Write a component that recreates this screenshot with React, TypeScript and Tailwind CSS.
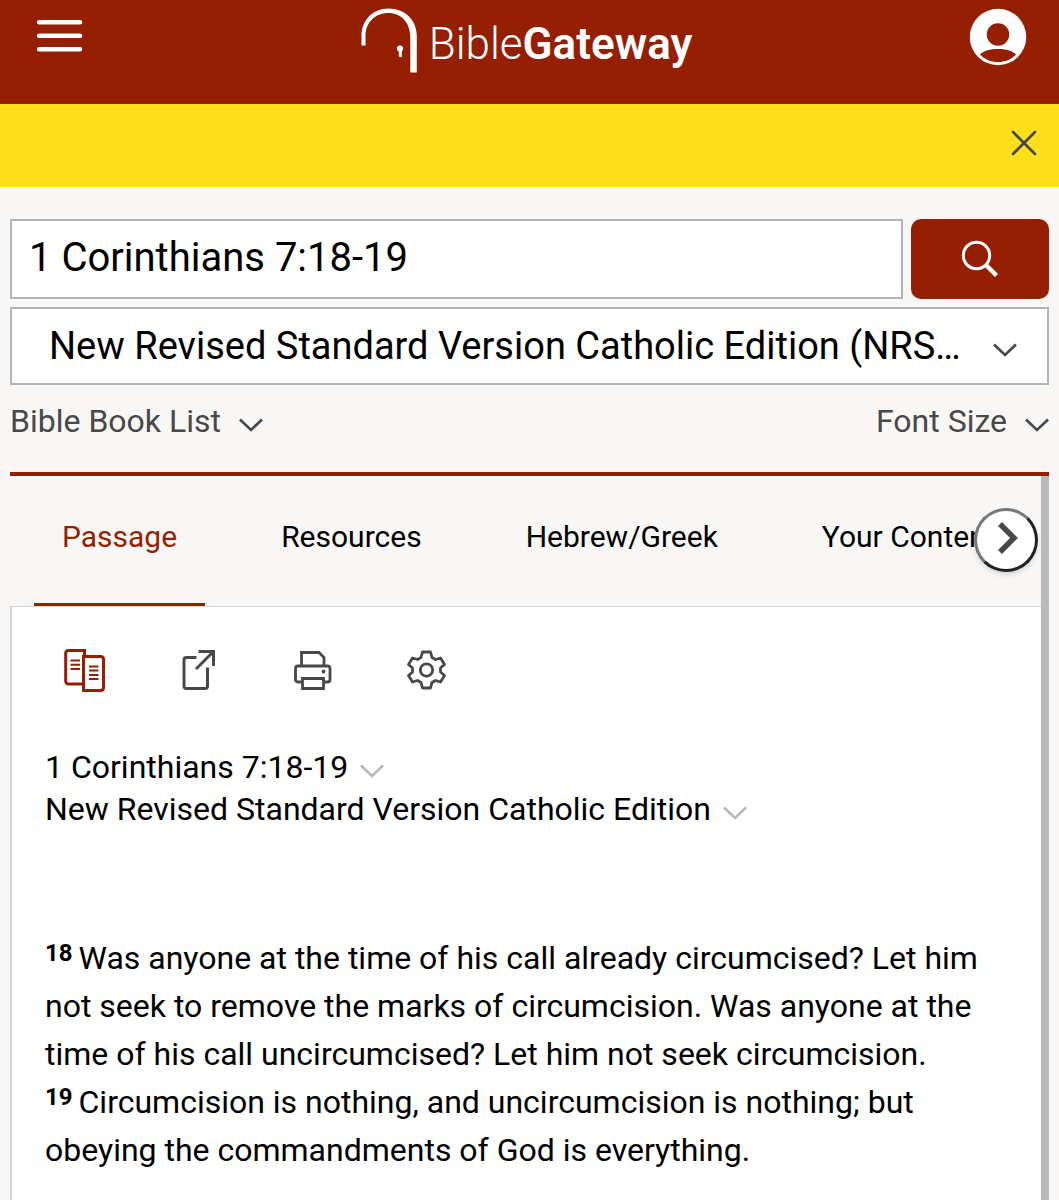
import { useState } from "react";

const tabs = ["Passage", "Resources", "Hebrew/Greek", "Your Content"];

const verses = [
  {
    number: 18,
    text: "Was anyone at the time of his call already circumcised? Let him not seek to remove the marks of circumcision. Was anyone at the time of his call uncircumcised? Let him not seek circumcision.",
  },
  {
    number: 19,
    text: "Circumcision is nothing, and uncircumcision is nothing; but obeying the commandments of God is everything.",
  },
];

function Chevron({ className }: { className?: string }) {
  return (
    <svg
      viewBox="0 0 24 14"
      className={`h-[14px] w-6 shrink-0 ${className ?? ""}`}
      fill="none"
      stroke="currentColor"
      strokeWidth="2.7"
      aria-hidden="true"
    >
      <path d="M1 1.5 12 12 23 1.5" />
    </svg>
  );
}

function Logo() {
  return (
    <a href="#" aria-label="BibleGateway" className="flex items-start text-white">
      <svg viewBox="0 0 56 66" className="mt-2 h-[66px] w-14" fill="none" aria-hidden="true">
        <path
          d="M0.5 37.5V28C0.5 12 12 0.5 27.5 0.5C44 0.5 55.8 12 55.8 28V64.5H49.3V29C49.3 14.5 40 5 27.500 5C14 5 4.5 14.500 4.5 28V37.5Z"
          fill="currentColor"
        />
        <circle cx="39" cy="40.500" r="3.1" fill="currentColor" />
        <path d="M37.800 41.500H40.800V49.500L37.800 48.500Z" fill="currentColor" />
      </svg>
      <span className="mt-4 ml-3 text-[44px] leading-[56px]">
        <span className="font-light">Bible</span>
        <span className="font-semibold">Gateway</span>
      </span>
    </a>
  );
}

function Header() {
  return (
    <header className="flex h-[104px] items-start justify-between bg-[#941f03] pr-8 pl-9 text-white">
      <button type="button" aria-label="Menu" className="mt-[19px] w-12">
        <svg
          viewBox="0 0 48 34"
          className="h-[34px] w-12"
          stroke="currentColor"
          strokeWidth="4.6"
          strokeLinecap="round"
        >
          <path d="M3.2 3.2H44M3.2 16.7H44M3.2 30.2H44" />
        </svg>
      </button>
      <Logo />
      <button type="button" aria-label="Account" className="mt-2">
        <svg viewBox="0 0 58 58" className="size-[58px]">
          <circle cx="29" cy="29" r="28.2" fill="white" />
          <circle cx="29" cy="26.5" r="11.2" fill="#941f03" />
          <path
            d="M11 46.5C15 42.5 21 41 29 41S43 42.5 47 46.5C42.5 51.5 36 54 29 54S15.5 51.5 11 46.5Z"
            fill="#941f03"
          />
        </svg>
      </button>
    </header>
  );
}

function Banner() {
  return (
    <div className="flex h-[83px] items-center justify-end bg-[#ffe01b] pr-[22px] pb-[6px] text-[#484848]">
      <button type="button" aria-label="Close">
        <svg
          viewBox="0 0 26 26"
          className="size-[26px]"
          stroke="currentColor"
          strokeWidth="2.7"
          strokeLinecap="round"
        >
          <path d="M2 2 24 24M24 2 2 24" />
        </svg>
      </button>
    </div>
  );
}

function SearchForm() {
  return (
    <form className="flex flex-col gap-2" onSubmit={(e) => e.preventDefault()}>
      <div className="flex gap-2">
        <input
          type="text"
          aria-label="Search passage"
          defaultValue="1 Corinthians 7:18-19"
          className="h-20 min-w-0 flex-1 border-2 border-[#b3b3b3] bg-white px-[17px] pb-1 text-[40px] text-black"
        />
        <button
          type="submit"
          aria-label="Search"
          className="flex h-20 w-[138px] items-center justify-center rounded-[10px] bg-[#941f03] text-white"
        >
          <svg viewBox="0 0 38 38" className="size-[38px]" fill="none" stroke="currentColor">
            <circle cx="15.5" cy="15.5" r="13.2" strokeWidth="3" />
            <path d="M24.5 24.5 35.5 35.5" strokeWidth="4.4" />
          </svg>
        </button>
      </div>
      <div className="relative">
        <select
          aria-label="Bible version"
          className="h-[78px] w-full appearance-none truncate border-2 border-[#b3b3b3] bg-white pr-[74px] pl-[37px] text-[38px] text-black"
        >
          <option>New Revised Standard Version Catholic Edition (NRSVCE)</option>
        </select>
        <Chevron className="pointer-events-none absolute top-9 right-8 text-[#484848]" />
      </div>
    </form>
  );
}

function Toolbar() {
  return (
    <div className="flex items-center gap-[75px] pl-[19px] text-[#484848]">
      <button type="button" aria-label="Add parallel" className="text-[#941f03]">
        <svg viewBox="0 0 42 44" className="h-11 w-[42px]" fill="none" stroke="currentColor">
          <path
            d="M19.5 36H4.5Q1.7 36 1.7 33V5.5Q1.7 2.5 4.5 2.5H20.5V8.5"
            strokeWidth="3"
          />
          <path
            d="M19.5 8.5H36.5Q39.5 8.5 39.5 11.5V39.5Q39.5 42.5 36.5 42.5H19.5Z"
            strokeWidth="3"
          />
          <path
            d="M6.5 12.5H16M6.5 16.7H16M6.5 21H16M25 18.5H34.5M25 22.5H34.5M25 27H34.5M25 31H34.5"
            strokeWidth="2"
          />
        </svg>
      </button>
      <button type="button" aria-label="Share">
        <svg
          viewBox="0 0 38 44"
          className="h-11 w-[38px]"
          fill="none"
          stroke="currentColor"
          strokeWidth="3"
        >
          <path d="M15.5 9.5H5.5Q3 9.5 3 12V38Q3 40.5 5.5 40.5H24Q26.5 40.5 26.5 38V19.5" />
          <path d="M17.5 3.5H32.5V18M32.5 3.5 15 21" />
        </svg>
      </button>
      <button type="button" aria-label="Print">
        <svg
          viewBox="0 0 38 44"
          className="h-11 w-[38px]"
          fill="none"
          stroke="currentColor"
          strokeWidth="2.8"
        >
          <path d="M7.5 18.5V4.5H25L30 9.5V18.5" />
          <path d="M8 34H4Q1.5 34 1.5 31.5V20.5Q1.5 18 4 18H33.5Q36 18 36 20.5V31.5Q36 34 33.5 34H30" />
          <path d="M8.5 30.5H29.5V40.5H8.5Z" />
          <circle cx="29.5" cy="23.5" r="1.9" fill="currentColor" stroke="none" />
        </svg>
      </button>
      <button type="button" aria-label="Page options">
        <svg
          viewBox="0 0 40 44"
          className="h-11 w-10"
          fill="none"
          stroke="currentColor"
          strokeWidth="2.8"
          strokeLinejoin="round"
        >
          <path d="M15.5 4H23.500L25 9.500L28.500 11.500L33.500 10L37.500 16.500L33.500 20V24L37.500 27.500L33.500 34L28.500 32.500L25 34.500L23.500 40H15.500L14 34.500L10.500 32.500L5.500 34L1.500 27.500L5.500 24V20L1.500 16.500L5.500 10L10.500 11.500L14 9.500Z" />
          <circle cx="19.5" cy="22" r="6.2" />
        </svg>
      </button>
    </div>
  );
}

export default function App() {
  const [active, setActive] = useState("Passage");

  return (
    <div className="flex min-h-screen flex-col bg-[#f8f7f5] font-[Roboto,sans-serif]">
      <Header />
      <Banner />

      <main className="flex flex-1 flex-col px-[10px] pt-8">
        <SearchForm />

        <div className="flex items-center justify-between pt-3 text-[32px] leading-[48px] text-[#484848]">
          <button type="button" className="flex items-center gap-[18px]">
            Bible Book List
            <Chevron className="mt-2" />
          </button>
          <button type="button" className="flex items-center gap-[18px]">
            Font Size
            <Chevron className="mt-2" />
          </button>
        </div>

        <section className="mt-[27px] flex flex-1 border-t-4 border-[#941f03]">
          <div className="flex min-w-0 flex-1 flex-col">
            <div className="relative">
              <nav className="flex h-[130px] gap-12 overflow-hidden pl-6 text-[30px] whitespace-nowrap">
                {tabs.map((tab) => (
                  <button
                    key={tab}
                    type="button"
                    onClick={() => setActive(tab)}
                    className={`border-b-[3px] px-7 pb-[6px] ${
                      tab === active
                        ? "border-[#941f03] text-[#941f03]"
                        : "border-transparent text-black"
                    }`}
                  >
                    {tab}
                  </button>
                ))}
              </nav>
              <button
                type="button"
                aria-label="Next tabs"
                className="absolute top-8 right-[3px] flex size-16 items-center justify-center rounded-full border-[3px] border-t-[#777] border-r-[#222] border-b-[#222] border-l-[#777] bg-white text-[#484848] shadow-md"
              >
                <svg
                  viewBox="0 0 22 34"
                  className="mb-1 ml-1 h-[34px] w-[22px]"
                  fill="none"
                  stroke="currentColor"
                  strokeWidth="5.5"
                >
                  <path d="M3 3 17 17 3 31" />
                </svg>
              </button>
            </div>

            <article className="flex-1 border-t border-l-2 border-[#d6d5d4] bg-white pt-[41px] pr-8 pl-[33px] text-black">
              <Toolbar />

              <h1 className="mt-[54px] text-[32px] leading-[42px]">
                <button type="button" className="flex items-center gap-3">
                  1 Corinthians 7:18-19
                  <Chevron className="mt-2 text-[#b9b9b9]" />
                </button>
                <button type="button" className="flex items-center gap-3">
                  New Revised Standard Version Catholic Edition
                  <Chevron className="mt-2 text-[#b9b9b9]" />
                </button>
              </h1>

              <p className="mt-[104px] text-[32px] leading-[48px]">
                {verses.map((verse) => (
                  <span key={verse.number}>
                    <sup className="top-[-8px] text-[24px] leading-none font-bold">
                      {verse.number}&nbsp;
                    </sup>
                    {verse.text}{" "}
                  </span>
                ))}
              </p>
            </article>
          </div>
          <div className="w-2 bg-[#bababa]" />
        </section>
      </main>
    </div>
  );
}
